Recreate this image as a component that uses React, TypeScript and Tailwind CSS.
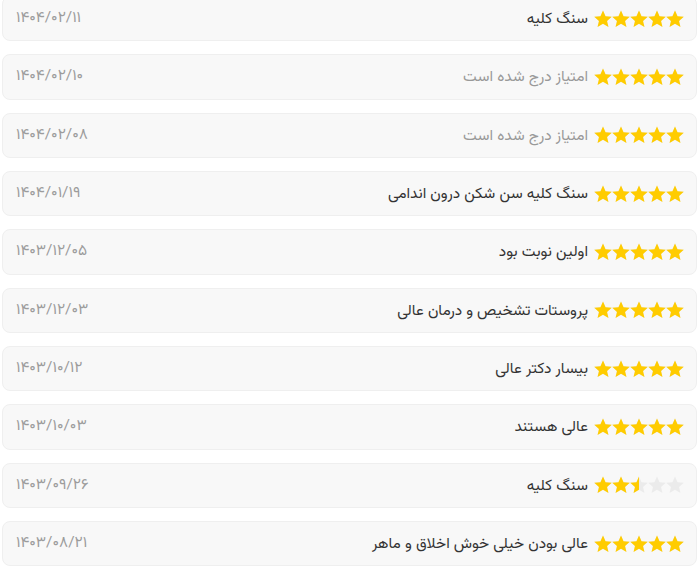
import React from "react";

type Item = { date: string; text: string; rating: number; muted?: boolean };

const items: Item[] = [
  { date: "۱۴۰۴/۰۲/۱۱", text: "سنگ کلیه", rating: 5 },
  { date: "۱۴۰۴/۰۲/۱۰", text: "امتیاز درج شده است", rating: 5, muted: true },
  { date: "۱۴۰۴/۰۲/۰۸", text: "امتیاز درج شده است", rating: 5, muted: true },
  { date: "۱۴۰۴/۰۱/۱۹", text: "سنگ کلیه سن شکن درون اندامی", rating: 5 },
  { date: "۱۴۰۳/۱۲/۰۵", text: "اولین نوبت بود", rating: 5 },
  { date: "۱۴۰۳/۱۲/۰۳", text: "پروستات تشخیص و درمان عالی", rating: 5 },
  { date: "۱۴۰۳/۱۰/۱۲", text: "بیسار دکتر عالی", rating: 5 },
  { date: "۱۴۰۳/۱۰/۰۳", text: "عالی هستند", rating: 5 },
  { date: "۱۴۰۳/۰۹/۲۶", text: "سنگ کلیه", rating: 2.5 },
  { date: "۱۴۰۳/۰۸/۲۱", text: "عالی بودن خیلی خوش اخلاق و ماهر", rating: 5 },
];

const STAR = "M9 0.5l2.55 5.75 6.2 0.6-4.7 4.1 1.42 6.1L9 13.85 3.53 17.05 4.95 10.95 0.25 6.85l6.2-0.6z";

function Star({ fill, id }: { fill: number; id: string }) {
  return (
    <svg width="18" height="18" viewBox="0 0 18 18" className="block">
      <defs>
        <clipPath id={id}>
          <rect x="0" y="0" width={18 * fill} height="18" />
        </clipPath>
      </defs>
      <path d={STAR} fill="#ebebeb" />
      {fill > 0 && <path d={STAR} fill="#ffcc00" clipPath={`url(#${id})`} />}
    </svg>
  );
}

function Stars({ rating, idx }: { rating: number; idx: number }) {
  return (
    <div className="flex" dir="ltr">
      {[0, 1, 2, 3, 4].map((i) => (
        <Star key={i} id={`s${idx}-${i}`} fill={Math.max(0, Math.min(1, rating - i))} />
      ))}
    </div>
  );
}

export default function App() {
  return (
    <div
      className="w-[697px] h-[566px] overflow-hidden bg-white"
      style={{ fontFamily: '"Vazirmatn", "DejaVu Sans", sans-serif' }}
    >
      <div className="mt-[-4px] flex flex-col gap-[13px] pl-[2px]">
        {items.map((it, idx) => (
          <div
            key={idx}
            dir="rtl"
            className="h-[45.33px] shrink-0 flex items-center justify-between rounded-[8px] border border-[#efefef] bg-[#f8f8f8] pr-[12px] pl-[13px]"
          >
            <div className="flex items-center gap-[6px]">
              <Stars rating={it.rating} idx={idx} />
              <span className={`text-[15.4px] leading-none pt-[2px] ${it.muted ? "text-[#999]" : "text-[#333]"}`}>{it.text}</span>
            </div>
            <span className="text-[15.5px] leading-none text-[#9c9c9c]">{it.date}</span>
          </div>
        ))}
      </div>
    </div>
  );
}
